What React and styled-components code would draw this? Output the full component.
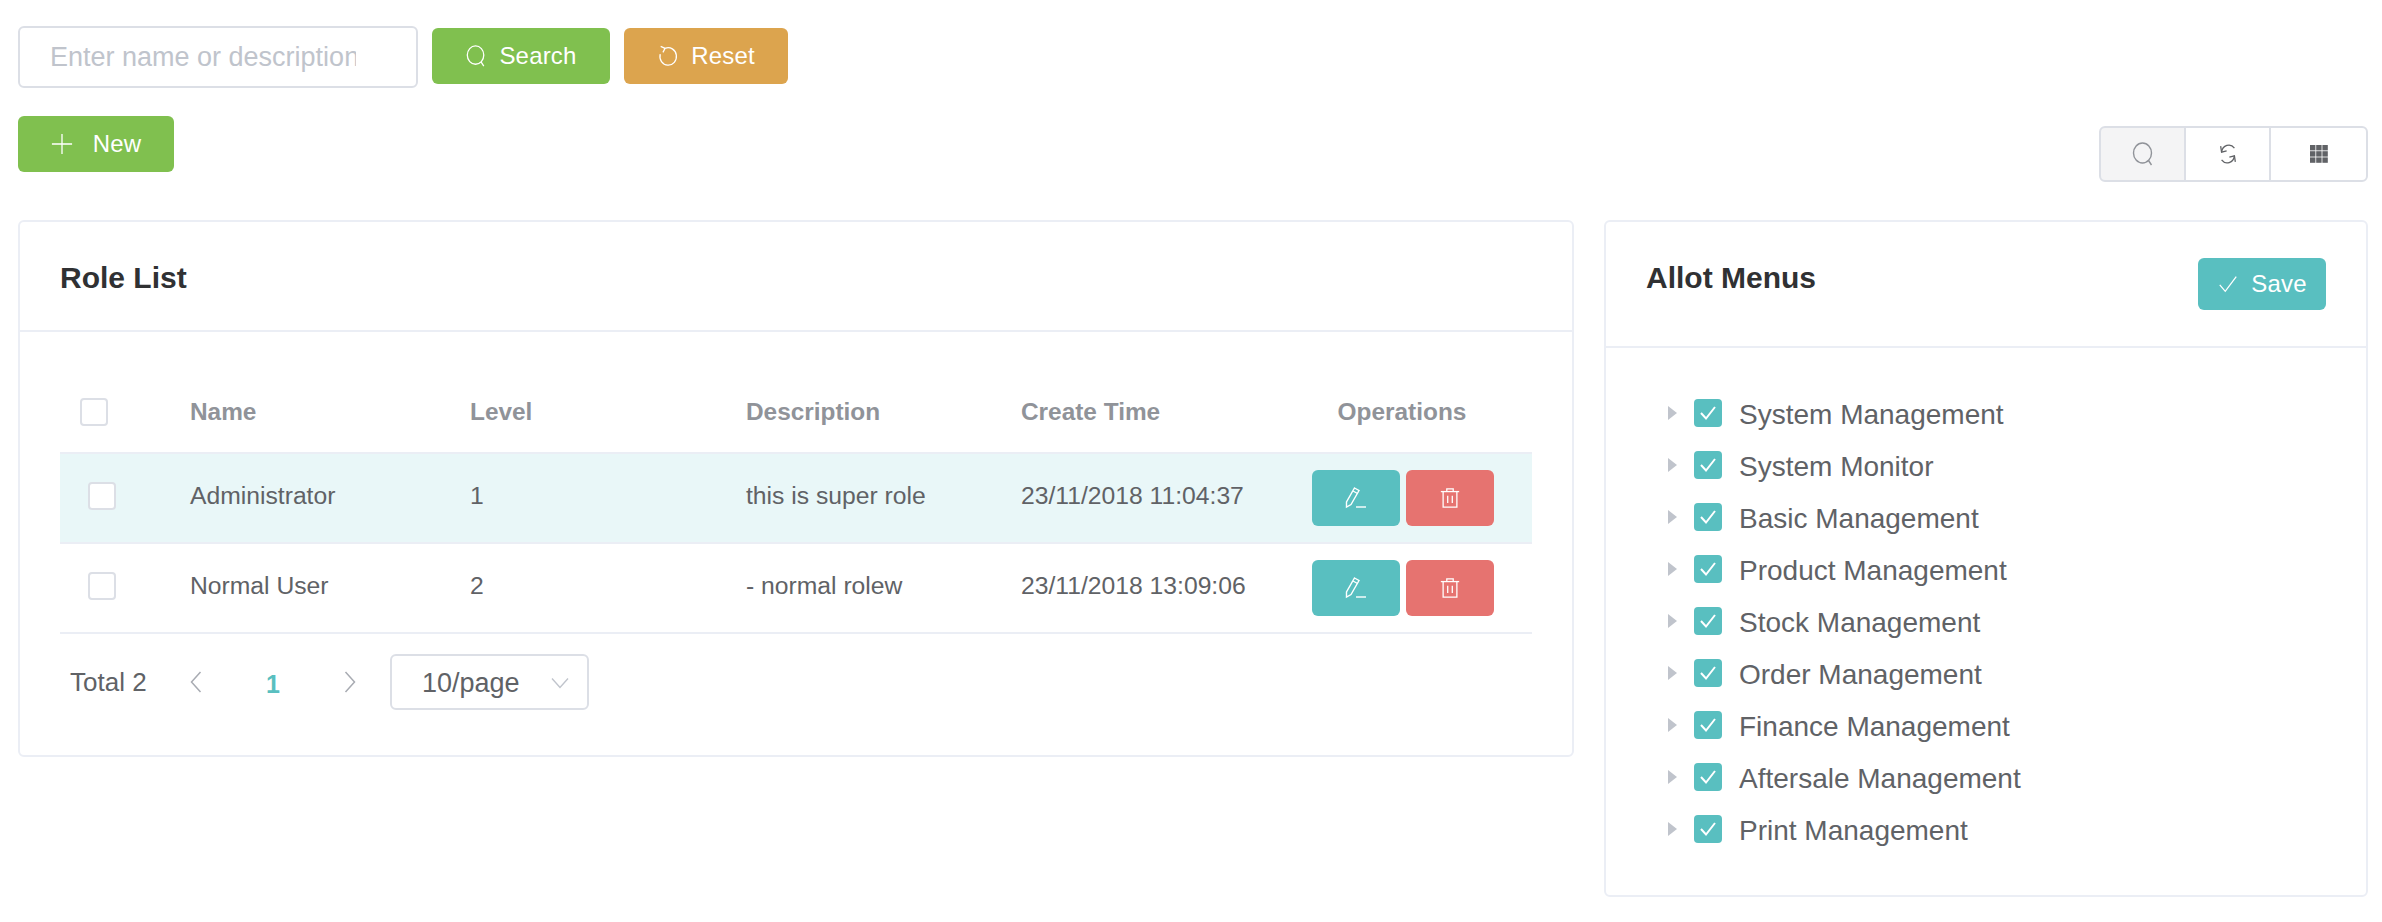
import styled, { createGlobalStyle } from "styled-components";

const GlobalStyle = createGlobalStyle`
  html, body {
    margin: 0;
    background: #fff;
    font-family: "Liberation Sans", Arial, sans-serif;
    color: #606266;
  }
  * { box-sizing: border-box; }
`;

const colors = {
  green: "#80c04f",
  orange: "#dca44e",
  teal: "#59bfc0",
  red: "#e67370",
};

const roles = [
  { name: "Administrator", level: 1, desc: "this is super role", time: "23/11/2018 11:04:37", active: true },
  { name: "Normal User", level: 2, desc: "- normal rolew", time: "23/11/2018 13:09:06" },
];

const menus = [
  "System Management",
  "System Monitor",
  "Basic Management",
  "Product Management",
  "Stock Management",
  "Order Management",
  "Finance Management",
  "Aftersale Management",
  "Print Management",
];

const Stroke = ({ size = 22, children }) => (
  <svg width={size} height={size} viewBox="0 0 24 24" fill="none" stroke="currentColor" strokeWidth="1.4">
    {children}
  </svg>
);

const SearchIcon = ({ size }) => (
  <Stroke size={size}>
    <ellipse cx="11.5" cy="11" rx="9" ry="10" />
    <path d="M17.5 18.5 L20.5 23" />
  </Stroke>
);

const ResetIcon = () => (
  <Stroke size={22}>
    <path d="M9 3.6 A9 9.5 0 1 1 3.5 10" />
    <path d="M4 1.5 L8.8 3.6 L6.5 8" />
  </Stroke>
);

const PlusIcon = () => (
  <Stroke size={22}>
    <path d="M12 1 V23 M1 12 H23" />
  </Stroke>
);

const CheckIcon = () => (
  <Stroke size={22}>
    <path d="M3 13 L9 20 L21 4" />
  </Stroke>
);

const SyncIcon = () => (
  <Stroke size={22}>
    <path d="M5 10 A8 9 0 0 1 19 5.5" />
    <path d="M4 3.5 L5 10 L10.5 8.5" />
    <path d="M19 14 A8 9 0 0 1 5 18.5" />
    <path d="M20 20.5 L19 14 L13.5 15.5" />
  </Stroke>
);

const GridIcon = () => (
  <svg width="20" height="20" viewBox="0 0 20 20" fill="currentColor">
    {[1, 7.2, 13.4].map((x) =>
      [1, 7.2, 13.4].map((y) => <rect key={`${x}-${y}`} x={x} y={y} width="5.4" height="5.4" />)
    )}
  </svg>
);

const EditIcon = () => (
  <Stroke size={24}>
    <path d="M10.5 2 L15 4.5 L7 18.5 L2.5 21 L2.5 16 Z" />
    <path d="M9 5 L13.5 7.5" />
    <path d="M12 21 H22" />
  </Stroke>
);

const TrashIcon = () => (
  <Stroke size={22}>
    <path d="M2 5 H22" />
    <path d="M8.5 5 V2 H15.5 V5" />
    <path d="M4.5 5 V22 H19.5 V5" />
    <path d="M9.5 9.5 V17.5 M14.5 9.5 V17.5" />
  </Stroke>
);

const Page = styled.div`
  width: 2382px;
  height: 922px;
  padding: 26px 14px 0 18px;
  overflow: hidden;
`;

const SearchBar = styled.div`
  display: flex;
  align-items: flex-start;
  gap: 14px;
  & > button {
    margin-top: 2px;
  }
`;

const SearchInput = styled.input`
  width: 400px;
  height: 62px;
  padding: 0 60px 0 30px;
  border: 2px solid #dcdfe6;
  border-radius: 6px;
  font: 27px "Liberation Sans", Arial, sans-serif;
  outline: none;
  &::placeholder {
    color: #c0c4cc;
    opacity: 1;
  }
`;

const Button = styled.button`
  display: flex;
  align-items: center;
  justify-content: center;
  gap: ${(p) => p.$gap || 12}px;
  width: ${(p) => p.$width}px;
  height: ${(p) => p.$height || 56}px;
  padding: 0;
  border: 0;
  border-radius: 6px;
  background: ${(p) => p.$bg};
  color: #fff;
  font: 24px "Liberation Sans", Arial, sans-serif;
  letter-spacing: 0.2px;
`;

const Toolbar = styled.div`
  display: flex;
  justify-content: space-between;
  align-items: flex-start;
  margin-top: 28px;
`;

const ToolGroup = styled.div`
  display: flex;
  margin-top: 10px;
`;

const ToolButton = styled.button`
  display: flex;
  align-items: center;
  justify-content: center;
  width: ${(p) => p.$width}px;
  height: 56px;
  margin-left: -2px;
  border: 2px solid #dcdfe6;
  background: ${(p) => (p.$active ? "#f4f4f5" : "#fff")};
  color: ${(p) => (p.$active ? "#909399" : "#606266")};
  &:first-child {
    margin-left: 0;
    border-radius: 6px 0 0 6px;
  }
  &:last-child {
    border-radius: 0 6px 6px 0;
  }
`;

const Columns = styled.div`
  display: flex;
  justify-content: space-between;
  align-items: flex-start;
  margin-top: 38px;
`;

const Card = styled.section`
  width: ${(p) => p.$width}px;
  border: 2px solid #ebeef5;
  border-radius: 6px;
  background: #fff;
`;

const CardHeader = styled.header`
  display: flex;
  justify-content: space-between;
  align-items: center;
  height: ${(p) => p.$height}px;
  padding: 0 40px;
  border-bottom: 2px solid #ebeef5;
`;

const CardTitle = styled.h2`
  margin: ${(p) => p.$margin};
  font-size: 30px;
  font-weight: 700;
  color: #303133;
`;

const TableWrap = styled.div`
  padding: 40px 40px 45px;
`;

const Cell = styled.div`
  padding-left: 14px;
  white-space: nowrap;
`;

const CheckCell = styled.div`
  padding-left: ${(p) => (p.$head ? 20 : 28)}px;
  display: flex;
`;

const Row = styled.div`
  display: grid;
  grid-template-columns: 116px 280px 276px 275px 265px 1fr;
  align-items: center;
  height: ${(p) => (p.$head ? 82 : 90)}px;
  border-bottom: 2px solid #ebeef5;
  background: ${(p) => (p.$active ? "#e9f7f8" : "transparent")};
  font-size: ${(p) => (p.$head ? 24.4 : 24.7)}px;
  font-weight: ${(p) => (p.$head ? 700 : 400)};
  color: ${(p) => (p.$head ? "#909399" : "#606266")};
  ${Cell}, ${CheckCell} {
    margin-bottom: ${(p) => (p.$head ? 0 : 4)}px;
  }
`;

const Box = styled.span`
  display: flex;
  align-items: center;
  justify-content: center;
  flex: none;
  width: 28px;
  height: 28px;
  border: ${(p) => (p.$checked ? "0" : "2px solid #dcdfe6")};
  border-radius: 4px;
  background: ${(p) => (p.$checked ? colors.teal : "#fff")};
  color: #fff;
`;

const OpsHead = styled.div`
  text-align: center;
`;

const Ops = styled.div`
  display: flex;
  justify-content: center;
  gap: 6px;
  padding-left: 2px;
`;

const Pagination = styled.div`
  display: flex;
  align-items: center;
  height: 56px;
  margin-top: 20px;
  padding-left: 10px;
  font-size: 26px;
`;

const Total = styled.span`
  width: 120px;
`;

const Chevron = styled.span`
  display: flex;
  width: 12px;
  color: #a8abb2;
`;

const PageNumber = styled.span`
  width: 142px;
  padding-top: 4px;
  text-align: center;
  font-weight: 700;
  font-size: 25px;
  color: ${colors.teal};
`;

const PageSize = styled.div`
  display: flex;
  align-items: center;
  justify-content: space-between;
  width: 199px;
  height: 56px;
  margin-left: 34px;
  padding: 2px 18px 0 30px;
  border: 2px solid #dcdfe6;
  border-radius: 6px;
  font-size: 27px;
  color: #606266;
`;

const Tree = styled.div`
  padding: 39px 0 40px 62px;
`;

const TreeRow = styled.div`
  display: flex;
  align-items: center;
  height: 52px;
  font-size: 28px;
`;

const Caret = styled.span`
  width: 0;
  height: 0;
  margin-right: 17px;
  border-left: 9px solid #c0c4cc;
  border-top: 7px solid transparent;
  border-bottom: 7px solid transparent;
`;

const TreeLabel = styled.span`
  margin-left: 17px;
  padding-top: 3px;
`;

const ChevronLeft = () => (
  <svg width="12" height="22" viewBox="0 0 12 22" fill="none" stroke="currentColor" strokeWidth="1.5">
    <path d="M10.5 1 L1.5 11 L10.5 21" />
  </svg>
);

const ChevronRight = () => (
  <svg width="12" height="22" viewBox="0 0 12 22" fill="none" stroke="currentColor" strokeWidth="1.5">
    <path d="M1.5 1 L10.5 11 L1.5 21" />
  </svg>
);

const ChevronDown = () => (
  <svg width="18" height="12" viewBox="0 0 18 12" fill="none" stroke="#c0c4cc" strokeWidth="1.4">
    <path d="M1 1.5 L9 10.5 L17 1.5" />
  </svg>
);

const SmallCheck = () => (
  <svg width="18" height="16" viewBox="0 0 18 16" fill="none" stroke="currentColor" strokeWidth="2">
    <path d="M2 8 L7 13.5 L16 2" />
  </svg>
);

export default function App() {
  return (
    <Page>
      <GlobalStyle />
      <SearchBar>
        <SearchInput placeholder="Enter name or description" />
        <Button $bg={colors.green} $width={178}>
          <SearchIcon />
          Search
        </Button>
        <Button $bg={colors.orange} $width={164}>
          <ResetIcon />
          Reset
        </Button>
      </SearchBar>

      <Toolbar>
        <Button $bg={colors.green} $width={156} $gap={20}>
          <PlusIcon />
          New
        </Button>
        <ToolGroup>
          <ToolButton $width={87} $active>
            <SearchIcon size={24} />
          </ToolButton>
          <ToolButton $width={87}>
            <SyncIcon />
          </ToolButton>
          <ToolButton $width={99}>
            <GridIcon />
          </ToolButton>
        </ToolGroup>
      </Toolbar>

      <Columns>
        <Card $width={1556}>
          <CardHeader $height={110}>
            <CardTitle $margin="4px 0 0">Role List</CardTitle>
          </CardHeader>
          <TableWrap>
            <Row $head>
              <CheckCell $head>
                <Box />
              </CheckCell>
              <Cell>Name</Cell>
              <Cell>Level</Cell>
              <Cell>Description</Cell>
              <Cell>Create Time</Cell>
              <OpsHead>Operations</OpsHead>
            </Row>
            {roles.map((role) => (
              <Row key={role.name} $active={role.active}>
                <CheckCell>
                  <Box />
                </CheckCell>
                <Cell>{role.name}</Cell>
                <Cell>{role.level}</Cell>
                <Cell>{role.desc}</Cell>
                <Cell>{role.time}</Cell>
                <Ops>
                  <Button $bg={colors.teal} $width={88}>
                    <EditIcon />
                  </Button>
                  <Button $bg={colors.red} $width={88}>
                    <TrashIcon />
                  </Button>
                </Ops>
              </Row>
            ))}
            <Pagination>
              <Total>Total 2</Total>
              <Chevron>
                <ChevronLeft />
              </Chevron>
              <PageNumber>1</PageNumber>
              <Chevron>
                <ChevronRight />
              </Chevron>
              <PageSize>
                10/page
                <ChevronDown />
              </PageSize>
            </Pagination>
          </TableWrap>
        </Card>

        <Card $width={764}>
          <CardHeader $height={126}>
            <CardTitle $margin="0 0 12px">Allot Menus</CardTitle>
            <Button $bg={colors.teal} $width={128} $height={52}>
              <CheckIcon />
              Save
            </Button>
          </CardHeader>
          <Tree>
            {menus.map((menu) => (
              <TreeRow key={menu}>
                <Caret />
                <Box $checked>
                  <SmallCheck />
                </Box>
                <TreeLabel>{menu}</TreeLabel>
              </TreeRow>
            ))}
          </Tree>
        </Card>
      </Columns>
    </Page>
  );
}
